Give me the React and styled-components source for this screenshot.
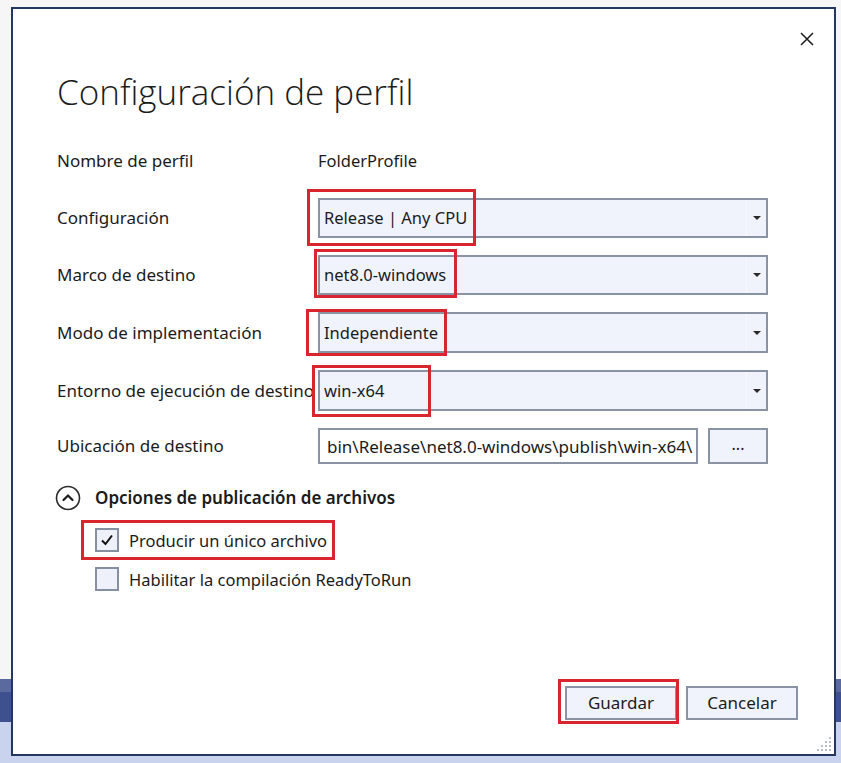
import React from "react";
import styled, { createGlobalStyle } from "styled-components";

const Global = createGlobalStyle`
  html, body { margin: 0; padding: 0; }
  body {
    width: 841px;
    height: 763px;
    overflow: hidden;
    font-family: "Noto Sans", "Open Sans", sans-serif;
    color: #1b1b1b;
    background: linear-gradient(
      to bottom,
      #f6f6f6 0px, #f6f6f6 679px,
      #5b6a9e 679px, #5b6a9e 692px,
      #3f508e 692px, #3f508e 722px,
      #c9d3ee 722px, #c9d3ee 763px
    );
  }
`;

const Dialog = styled.div`
  position: relative;
  box-sizing: border-box;
  margin: 7px 5px 0 11px;
  height: 749px;
  border: 2px solid #24375f;
  background: #ffffff;
  display: flex;
  flex-direction: column;
  padding: 0 66px 0 44px;
`;

const Header = styled.div`
  display: flex;
  justify-content: flex-end;
  height: 60px;
  margin-right: -47px;
  padding-top: 22px;
  box-sizing: border-box;
`;

const CloseButton = styled.button`
  border: none;
  background: transparent;
  width: 16px;
  height: 16px;
  padding: 0;
  display: flex;
  align-items: center;
  justify-content: center;
  cursor: pointer;
`;

const Title = styled.h1`
  margin: 0;
  font-family: "Open Sans", sans-serif;
  font-weight: 300;
  font-size: 35px;
  line-height: 46px;
  letter-spacing: 0;
  color: #1b1b1b;
  height: 46px;
`;

const Form = styled.div`
  margin-top: 26px;
  display: grid;
  grid-template-columns: 261px 1fr;
  grid-template-rows: 40px 40px 40px 41px 41px 36px;
  row-gap: 17px;
  align-items: center;
`;

const Label = styled.div`
  font-size: 17px;
  line-height: 22px;
  white-space: nowrap;
  color: #1b1b1b;
`;

const Value = styled.div`
  font-size: 16.5px;
  line-height: 22px;
  color: #1b1b1b;
`;

const Field = styled.div`
  position: relative;
  height: 100%;
  display: flex;
  gap: 10px;
`;

const Combo = styled.div`
  flex: 1;
  box-sizing: border-box;
  height: 100%;
  border: 2px solid #8a93a4;
  background: #f0f3fb;
  display: flex;
  align-items: center;
`;

const ComboText = styled.div`
  flex: 1;
  padding-left: 4px;
  font-size: 16.5px;
  line-height: 22px;
`;

const ArrowCell = styled.div`
  width: 19px;
  height: 100%;
  border-left: 1px solid #f8f9fd;
  display: flex;
  align-items: center;
  justify-content: center;
`;

const Arrow = styled.span`
  width: 0;
  height: 0;
  border-left: 4px solid transparent;
  border-right: 4px solid transparent;
  border-top: 4px solid #2a2a2a;
`;

const TextInput = styled.div`
  flex: 1;
  box-sizing: border-box;
  height: 100%;
  border: 2px solid #8a93a4;
  background: #ffffff;
  display: flex;
  align-items: center;
  padding-left: 7px;
  font-size: 17px;
  white-space: nowrap;
  overflow: hidden;
`;

const BrowseButton = styled.button`
  width: 60px;
  box-sizing: border-box;
  height: 100%;
  border: 2px solid #8a93a4;
  background: #f0f3fb;
  font-family: inherit;
  font-size: 16px;
  color: #1b1b1b;
  padding: 0 0 4px;
`;

const Highlight = styled.div`
  position: absolute;
  left: ${(p) => p.$left}px;
  top: ${(p) => p.$top}px;
  width: ${(p) => p.$w}px;
  height: ${(p) => p.$h}px;
  box-sizing: border-box;
  border: 3px solid #d9252f;
  pointer-events: none;
`;

const Section = styled.div`
  margin-top: 21px;
  display: flex;
  align-items: center;
  gap: 14px;
  margin-left: -2px;
`;

const SectionTitle = styled.div`
  font-size: 17px;
  font-weight: 600;
  line-height: 22px;
`;

const Options = styled.div`
  margin-top: 17px;
  margin-left: 38px;
  display: flex;
  flex-direction: column;
  gap: 15px;
`;

const CheckRow = styled.label`
  position: relative;
  display: flex;
  align-items: center;
  gap: 10px;
  height: 24px;
  font-size: 16.5px;
`;

const Box = styled.span`
  box-sizing: border-box;
  width: 24px;
  height: 24px;
  border: 2px solid #868fa0;
  background: #eef1fa;
  display: flex;
  align-items: center;
  justify-content: center;
`;

const Footer = styled.div`
  margin-top: auto;
  margin-bottom: 34px;
  margin-right: -30px;
  display: flex;
  justify-content: flex-end;
  gap: 9px;
`;

const ButtonSlot = styled.div`
  position: relative;
  display: flex;
`;

const Button = styled.button`
  width: 112px;
  height: 34px;
  box-sizing: border-box;
  border: 2px solid #8a93a4;
  background: #f0f3fb;
  font-family: inherit;
  font-size: 17px;
  color: #1b1b1b;
  padding: 0 0 2px;
`;

const Grip = styled.svg`
  position: absolute;
  right: 2px;
  bottom: 2px;
`;

const combos = [
  { label: "Configuración", value: "Release | Any CPU", hl: { $left: -11, $top: -9, $w: 169, $h: 57 } },
  { label: "Marco de destino", value: "net8.0-windows", hl: { $left: -4, $top: -6, $w: 143, $h: 49 } },
  { label: "Modo de implementación", value: "Independiente", hl: { $left: -12, $top: -3, $w: 141, $h: 47 } },
  { label: "Entorno de ejecución de destino", value: "win-x64", hl: { $left: -6, $top: -5, $w: 119, $h: 52 } },
];

export default function App() {
  return (
    <>
      <Global />
      <Dialog>
        <Header>
          <CloseButton aria-label="Cerrar">
            <svg width="14" height="14" viewBox="0 0 14 14">
              <path d="M1 1 L13 13 M13 1 L1 13" stroke="#1b1b1b" strokeWidth="1.5" />
            </svg>
          </CloseButton>
        </Header>
        <Title>Configuración de perfil</Title>
        <Form>
          <Label>Nombre de perfil</Label>
          <Value>FolderProfile</Value>
          {combos.map((c) => (
            <React.Fragment key={c.label}>
              <Label>{c.label}</Label>
              <Field>
                <Combo>
                  <ComboText>{c.value}</ComboText>
                  <ArrowCell>
                    <Arrow />
                  </ArrowCell>
                </Combo>
                <Highlight {...c.hl} />
              </Field>
            </React.Fragment>
          ))}
          <Label>Ubicación de destino</Label>
          <Field>
            <TextInput>bin\Release\net8.0-windows\publish\win-x64\</TextInput>
            <BrowseButton>...</BrowseButton>
          </Field>
        </Form>
        <Section>
          <svg width="26" height="26" viewBox="0 0 26 26">
            <circle cx="13" cy="13" r="11.5" fill="none" stroke="#2a2a2a" strokeWidth="1.6" />
            <path d="M8.5 15 L13 10.5 L17.5 15" fill="none" stroke="#1b1b1b" strokeWidth="2.2" strokeLinecap="round" strokeLinejoin="round" />
          </svg>
          <SectionTitle>Opciones de publicación de archivos</SectionTitle>
        </Section>
        <Options>
          <CheckRow>
            <Box>
              <svg width="14" height="14" viewBox="0 0 14 14">
                <path d="M2 7.5 L5.5 11 L12 2.5" fill="none" stroke="#111" strokeWidth="2" />
              </svg>
            </Box>
            Producir un único archivo
            <Highlight $left={-14} $top={-8} $w={254} $h={40} />
          </CheckRow>
          <CheckRow>
            <Box />
            Habilitar la compilación ReadyToRun
          </CheckRow>
        </Options>
        <Footer>
          <ButtonSlot>
            <Button>Guardar</Button>
            <Highlight $left={-7} $top={-7} $w={121} $h={45} />
          </ButtonSlot>
          <ButtonSlot>
            <Button>Cancelar</Button>
          </ButtonSlot>
        </Footer>
        <Grip width="16" height="16" viewBox="0 0 16 16">
          {[
            [13, 1], [13, 5], [9, 5], [13, 9], [9, 9], [5, 9], [13, 13], [9, 13], [5, 13], [1, 13],
          ].map(([x, y]) => (
            <rect key={`${x}-${y}`} x={x} y={y} width="2" height="2" fill="#b7bcc8" />
          ))}
        </Grip>
      </Dialog>
    </>
  );
}
